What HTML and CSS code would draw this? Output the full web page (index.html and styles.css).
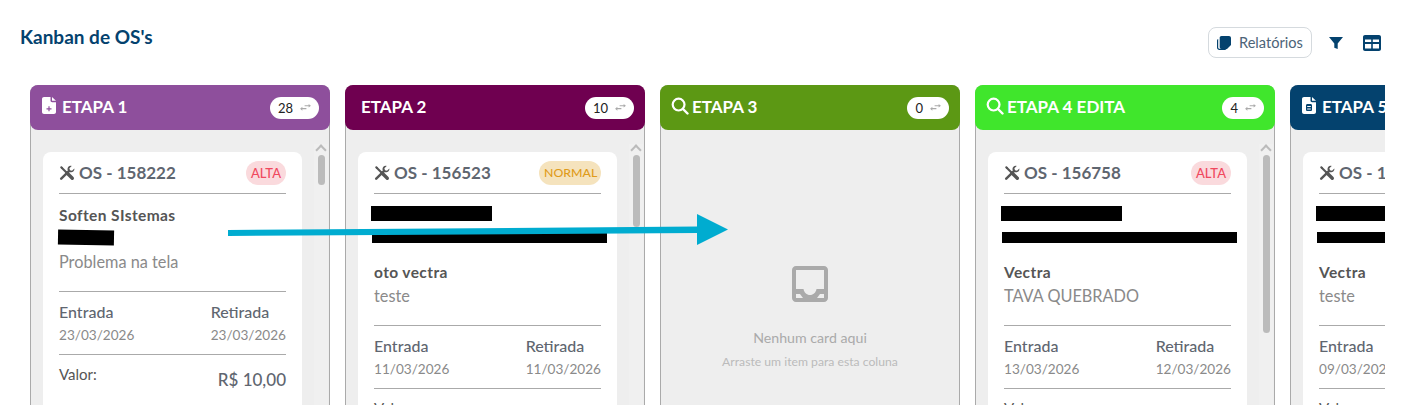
FILE: index.html
```html
<!DOCTYPE html>
<html lang="pt-BR">
<head>
    <meta charset="UTF-8">
    <title>Kanban de OS's</title>
    <link rel="stylesheet" href="styles.css">
</head>
<body>
    <svg width="0" height="0" class="defs">
        <symbol id="i-tools" viewBox="0 0 16 16">
            <path d="M2.200 2.200 8 8" fill="none" stroke="currentColor" stroke-width="2"/>
            <path d="M1 2.200 2.200 1 4 2.800 2.800 4z" fill="currentColor"/>
            <path d="M8 8l5.300 5.300" fill="none" stroke="currentColor" stroke-width="3.400" stroke-linecap="round"/>
            <path d="M15.300 3.500 13 5.800l-2-.6-.6-2L12.700.9C10.400.2 8.300 2 8.500 4.300c0 .4.100.8.300 1.100L1.400 12.800c-.6.600-.6 1.300-.1 1.800.6.600 1.300.5 1.800 0l7.400-7.400c2.800.8 5.400-1.400 4.800-3.700z" fill="currentColor"/>
        </symbol>
        <symbol id="i-search" viewBox="0 0 18 18">
            <circle cx="7.600" cy="7.600" r="5.900" fill="none" stroke="currentColor" stroke-width="2.200"/>
            <path d="M12 12l4.500 4.500" fill="none" stroke="currentColor" stroke-width="2.400" stroke-linecap="round"/>
        </symbol>
        <symbol id="i-swap" viewBox="0 0 12 10">
            <path d="M5 2.500h4.500V1L12 3 9.500 5V3.700H5z" fill="#aaa"/>
            <path d="M7 5.500H2.500V4.300L0 6.500l2.500 2V7H7z" fill="#aaa"/>
        </symbol>
    </svg>

    <header class="topbar">
        <h1 class="page-title">Kanban de OS's</h1>
        <div class="topbar-actions">
            <button class="btn-report">
                <svg class="report-icon" viewBox="0 0 14 14"><path d="M4.500 0h7.500C13.100 0 14 .9 14 2v7l-4 4H4.500C3.400 13 2.700 12.300 2.700 11V1.800C2.700.8 3.400 0 4.500 0z" fill="#04426e"/><path d="M0 4.500C0 3.700.4 3.200 1.200 3v8.500c0 1 .8 1.300 1.500 1.300H9.500c-.2.700-.7 1.200-1.500 1.200H2.500C1 14 0 13 0 11.500z" fill="#04426e"/></svg>
                <span>Relatórios</span>
            </button>
            <svg class="filter-icon" viewBox="0 0 14 14"><path d="M0 1h14L8.700 7.500V13l-3.400-1.200V7.500z" fill="#04426e"/></svg>
            <svg class="table-icon" viewBox="0 0 18 16"><path fill-rule="evenodd" d="M2 0h14c1.100 0 2 .9 2 2v12c0 1.100-.9 2-2 2H2c-1.100 0-2-.9-2-2V2C0 .9.9 0 2 0zm0 4.500V7h6.200V4.500zm7.800 0V7H16V4.500zM2 9v4.500h6.200V9zm7.800 0v4.500H16V9z" fill="#04426e"/></svg>
        </div>
    </header>

    <main class="board">
        <section class="column">
            <div class="column-header etapa-1">
                <svg class="head-icon doc-icon" viewBox="0 0 14 17"><path d="M2 0h6.500v3.500c0 1 .7 1.700 1.700 1.700H14V15c0 1.100-.9 2-2 2H2c-1.100 0-2-.9-2-2V2C0 .9.900 0 2 0z" fill="#fff"/><path d="M10 0l4 3.800h-4z" fill="#fff"/><path d="M6.400 9.300h1.200v1.900h1.900v1.200H7.600v1.900H6.400v-1.900H4.500v-1.200h1.900z" fill="#8e4f9c"/></svg>
                <span class="column-title">ETAPA 1</span>
                <span class="count">28 <svg class="swap"><use href="#i-swap"/></svg></span>
            </div>
            <div class="column-body">
                <div class="card-list">
                    <article class="card">
                        <div class="card-head">
                            <svg class="tool"><use href="#i-tools"/></svg>
                            <span class="os-number">OS - 158222</span>
                            <span class="priority alta">ALTA</span>
                        </div>
                        <div class="client short">
                            <div class="name">Soften SIstemas</div>
                            <div class="redact r-small"></div>
                            <div class="desc">Problema na tela</div>
                        </div>
                        <div class="dates">
                            <div><div class="date-label">Entrada</div><div class="date-value">23/03/2026</div></div>
                            <div class="right"><div class="date-label">Retirada</div><div class="date-value">23/03/2026</div></div>
                        </div>
                        <div class="value">
                            <span class="value-label">Valor:</span>
                            <span class="value-amount">R$ 10,00</span>
                        </div>
                    </article>
                </div>
                <div class="scroll-rail"><i class="chevron"></i><div class="thumb" style="height: 30px"></div></div>
            </div>
        </section>

        <section class="column">
            <div class="column-header etapa-2">
                <span class="column-title no-icon">ETAPA 2</span>
                <span class="count">10 <svg class="swap"><use href="#i-swap"/></svg></span>
            </div>
            <div class="column-body">
                <div class="card-list">
                    <article class="card">
                        <div class="card-head">
                            <svg class="tool"><use href="#i-tools"/></svg>
                            <span class="os-number">OS - 156523</span>
                            <span class="priority normal">NORMAL</span>
                        </div>
                        <div class="redact-group">
                            <div class="redact r-mid"></div>
                            <div class="redact r-wide"></div>
                        </div>
                        <div class="client">
                            <div class="name">oto vectra</div>
                            <div class="desc">teste</div>
                        </div>
                        <div class="dates">
                            <div><div class="date-label">Entrada</div><div class="date-value">11/03/2026</div></div>
                            <div class="right"><div class="date-label">Retirada</div><div class="date-value">11/03/2026</div></div>
                        </div>
                        <div class="value"><span class="value-label">Valor:</span></div>
                    </article>
                </div>
                <div class="scroll-rail"><i class="chevron"></i><div class="thumb" style="height: 72px"></div></div>
            </div>
        </section>

        <section class="column">
            <div class="column-header etapa-3">
                <svg class="head-icon search-icon"><use href="#i-search"/></svg>
                <span class="column-title">ETAPA 3</span>
                <span class="count">0 <svg class="swap"><use href="#i-swap"/></svg></span>
            </div>
            <div class="column-body empty">
                <svg class="inbox" viewBox="0 0 36 36"><path fill-rule="evenodd" d="M4 0h28c2.200 0 4 1.800 4 4v28c0 2.200-1.800 4-4 4H4c-2.200 0-4-1.800-4-4V4c0-2.200 1.800-4 4-4zM4 4v19h7.500c.5 3.400 3.200 6 6.500 6s6-2.600 6.500-6H32V4zM4 28v4h7l-3-4zm24 0-3 4h7v-4z" fill="#aaa"/></svg>
                <div class="empty-title">Nenhum card aqui</div>
                <div class="empty-sub">Arraste um item para esta coluna</div>
            </div>
        </section>

        <section class="column">
            <div class="column-header etapa-4">
                <svg class="head-icon search-icon"><use href="#i-search"/></svg>
                <span class="column-title">ETAPA 4 EDITA</span>
                <span class="count">4 <svg class="swap"><use href="#i-swap"/></svg></span>
            </div>
            <div class="column-body">
                <div class="card-list">
                    <article class="card">
                        <div class="card-head">
                            <svg class="tool"><use href="#i-tools"/></svg>
                            <span class="os-number">OS - 156758</span>
                            <span class="priority alta">ALTA</span>
                        </div>
                        <div class="redact-group">
                            <div class="redact r-mid"></div>
                            <div class="redact r-wide"></div>
                        </div>
                        <div class="client">
                            <div class="name">Vectra</div>
                            <div class="desc">TAVA QUEBRADO</div>
                        </div>
                        <div class="dates">
                            <div><div class="date-label">Entrada</div><div class="date-value">13/03/2026</div></div>
                            <div class="right"><div class="date-label">Retirada</div><div class="date-value">12/03/2026</div></div>
                        </div>
                        <div class="value"><span class="value-label">Valor:</span></div>
                    </article>
                </div>
                <div class="scroll-rail"><i class="chevron"></i><div class="thumb" style="height: 178px"></div></div>
            </div>
        </section>

        <section class="column">
            <div class="column-header etapa-5">
                <svg class="head-icon doc-icon" viewBox="0 0 14 17"><path d="M2 0h6.500v3.500c0 1 .7 1.700 1.700 1.700H14V15c0 1.100-.9 2-2 2H2c-1.100 0-2-.9-2-2V2C0 .9.900 0 2 0z" fill="#fff"/><path d="M10 0l4 3.800h-4z" fill="#fff"/><path d="M5.500 7h3c1 0 1.500.6 1.500 1.500v4c0 1-.5 1.500-1.500 1.500h-3C4.500 14 4 13.500 4 12.500v-4C4 7.600 4.500 7 5.500 7zm-.3 2v1h3.600V9zm0 2.500v1h3.600v-1z" fill="#04426e"/></svg>
                <span class="column-title">ETAPA 5</span>
            </div>
            <div class="column-body">
                <div class="card-list">
                    <article class="card">
                        <div class="card-head">
                            <svg class="tool"><use href="#i-tools"/></svg>
                            <span class="os-number">OS - 156301</span>
                        </div>
                        <div class="redact-group">
                            <div class="redact r-mid"></div>
                            <div class="redact r-wide"></div>
                        </div>
                        <div class="client">
                            <div class="name">Vectra</div>
                            <div class="desc">teste</div>
                        </div>
                        <div class="dates">
                            <div><div class="date-label">Entrada</div><div class="date-value">09/03/2026</div></div>
                        </div>
                        <div class="value"><span class="value-label">Valor:</span></div>
                    </article>
                </div>
            </div>
        </section>
    </main>

    <!-- seta de anotacao por cima do quadro -->
    <svg class="arrow" viewBox="0 0 510 40" width="510" height="40">
        <path d="M0 17 470 13.500V20L0 23z" fill="#00acd0"/>
        <path d="M469 1 500 16.500 469 32z" fill="#00acd0"/>
    </svg>
</body>
</html>
```

FILE: styles.css
```css
* {
    margin: 0;
    padding: 0;
    box-sizing: border-box;
}

html, body {
    height: 405px;
    overflow: hidden;
}

body {
    position: relative;
    background: white;
    font-family: Lato, "Noto Sans", sans-serif;
    color: #555;
}

.defs {
    position: absolute;
}

.topbar {
    height: 85px;
    padding: 27px 22px 0 20px;
    display: flex;
    justify-content: space-between;
    align-items: flex-start;
}

.page-title {
    font-size: 19px;
    line-height: 20px;
    font-weight: 700;
    color: #04426e;
}

.topbar-actions {
    display: flex;
    align-items: center;
}

.btn-report {
    width: 104px;
    height: 31px;
    border: 1px solid #d5dade;
    border-radius: 8px;
    background: white;
    color: #4d6478;
    font: 14.600px Lato, "Noto Sans", sans-serif;
    display: flex;
    align-items: center;
    padding-left: 8px;
}

.report-icon {
    width: 14px;
    height: 14px;
    margin-right: 8px;
}

.filter-icon {
    width: 14px;
    height: 14px;
    margin-left: 17px;
}

.table-icon {
    width: 18px;
    height: 16px;
    margin-left: 20px;
}

.board {
    margin-left: 30px;
    width: 1355px;
    height: 320px;
    display: flex;
    gap: 15px;
    overflow: hidden;
}

.column {
    flex: none;
    width: 300px;
    height: 340px;
    background: #eee;
    border: 1px solid #aaa;
    border-radius: 8px 8px 0 0;
    display: flex;
    flex-direction: column;
}

.column-header {
    height: 45px;
    margin: -1px -1px 0;
    padding: 0 11px 0 12px;
    border-radius: 8px;
    display: flex;
    align-items: center;
    color: white;
    flex: none;
}

.etapa-1 { background: #8e4f9c; }
.etapa-2 { background: #6f0050; }
.etapa-3 { background: #5c9814; }
.etapa-4 { background: #40e62c; }
.etapa-5 { background: #04426e; }

.head-icon {
    flex: none;
    margin-top: -4px;
}

.doc-icon {
    width: 14px;
    height: 17px;
    margin-right: 6px;
}

.search-icon {
    width: 18px;
    height: 18px;
    margin-left: -1px;
    margin-right: 3px;
    color: white;
}

.column-title {
    font-size: 17px;
    line-height: 20px;
    margin-top: -1px;
    font-weight: 700;
    flex: 1;
}

.column-title.no-icon {
    padding-left: 4px;
}

.count {
    height: 22px;
    padding: 0 8px;
    border-radius: 11px;
    background: white;
    color: #222;
    font-size: 13px;
    display: flex;
    align-items: center;
    gap: 7px;
}

.swap {
    width: 11px;
    height: 9px;
}

.column-body {
    flex: 1;
    display: flex;
    padding: 22px 0 0 12px;
}

.card-list {
    width: 259px;
    flex: none;
}

.card {
    background: white;
    border-radius: 8px;
    padding: 8px 16px 0;
    height: 300px;
}

.card-head {
    height: 34px;
    padding-bottom: 8px;
    border-bottom: 1px solid #aaa;
    display: flex;
    align-items: center;
}

.tool {
    width: 16px;
    height: 16px;
    color: #555;
    margin-right: 4px;
    flex: none;
}

.os-number {
    font-size: 17px;
    font-weight: 700;
    color: #5f6670;
    flex: 1;
    white-space: nowrap;
}

.priority {
    height: 24px;
    padding: 0 5px;
    border-radius: 12px;
    font-size: 13px;
    line-height: 24px;
    font-weight: 500;
}

.priority.alta {
    background: #fadadd;
    color: #f0485d;
}

.priority.normal {
    background: #f5e3bd;
    color: #e09b1a;
    font-size: 12.300px;
    padding: 0 5px;
    width: 62px;
    text-align: center;
}

.redact-group {
    height: 57px;
    padding-top: 12px;
}

.redact {
    background: black;
    margin-left: -3px;
}

.r-small {
    width: 56px;
    height: 15px;
    margin-top: 6px;
    margin-left: -1px;
    transform: rotate(1deg);
}

.r-mid {
    width: 121px;
    height: 15px;
}

.r-wide {
    width: 235px;
    height: 11px;
    margin-top: 11px;
    margin-left: -2px;
}

.client {
    height: 75px;
    padding-top: 12px;
    border-bottom: 1px solid #aaa;
}

.client.short {
    height: 98px;
    padding-top: 12px;
}

.name {
    font-size: 15.500px;
    letter-spacing: .4px;
    line-height: 18px;
    font-weight: 700;
}

.desc {
    font-size: 16.300px;
    line-height: 20px;
    color: #8a8a8a;
    margin-top: 5px;
}

.client.short .desc {
    margin-top: 7px;
}

.dates {
    height: 63px;
    padding-top: 10px;
    border-bottom: 1px solid #aaa;
    display: flex;
    justify-content: space-between;
}

.date-label {
    font-size: 16px;
    line-height: 20px;
    font-weight: 500;
    color: #5f6670;
}

.date-value {
    font-size: 13.600px;
    line-height: 18px;
    margin-top: 4px;
    color: #8a8a8a;
}

.value {
    padding-top: 9px;
    display: flex;
    justify-content: space-between;
}

.value-label {
    font-size: 15px;
    line-height: 20px;
}

.value-amount {
    font-size: 17px;
    line-height: 20px;
    font-weight: 500;
    margin-top: 6px;
    color: #5f6670;
}

.scroll-rail {
    width: 14px;
    margin-left: 12px;
    margin-top: -8px;
    background: #f0f0f0;
    display: flex;
    flex-direction: column;
    align-items: center;
}

.chevron {
    width: 8px;
    height: 8px;
    margin-top: 2px;
    border-top: 2px solid #bbb;
    border-left: 2px solid #bbb;
    transform: rotate(45deg);
}

.thumb {
    width: 7px;
    margin-top: 1px;
    background: #bbb;
    border-radius: 4px;
}

.column-body.empty {
    flex-direction: column;
    align-items: center;
    padding: 136px 0 0;
}

.inbox {
    width: 36px;
    height: 36px;
}

.empty-title {
    margin-top: 27px;
    font-size: 14.200px;
    color: #aaa;
}

.empty-sub {
    margin-top: 8px;
    font-size: 12.200px;
    color: #bbb;
}

.arrow {
    position: absolute;
    left: 228px;
    top: 213px;
}
```
